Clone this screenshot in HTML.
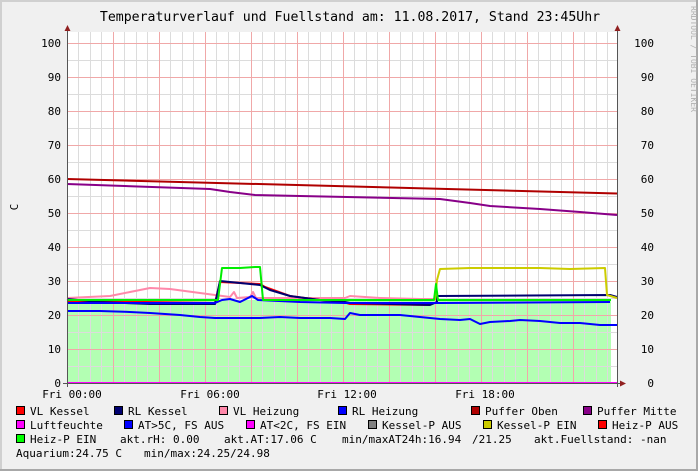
<!DOCTYPE html>
<html><head><meta charset="utf-8"><style>
html,body{margin:0;padding:0;background:#f0f0f0}
svg{display:block}
text{font-family:"DejaVu Sans Mono","Liberation Mono",monospace;white-space:pre}
</style></head><body>
<svg width="698" height="471" viewBox="0 0 698 471" xmlns="http://www.w3.org/2000/svg">
<rect x="0" y="0" width="698" height="471" fill="#f0f0f0"/>
<rect x="0" y="0" width="698" height="2" fill="#d0d0d0"/>
<rect x="0" y="0" width="2" height="471" fill="#d0d0d0"/>
<rect x="696" y="0" width="2" height="471" fill="#a8a8a8"/>
<rect x="0" y="469" width="698" height="2" fill="#a8a8a8"/>
<text x="350" y="21" font-size="13.2" text-anchor="middle" fill="#000">Temperaturverlauf und Fuellstand am: 11.08.2017, Stand 23:45Uhr</text>
<text transform="translate(691,6) rotate(90)" font-size="8" fill="#b0b0b0">RRDTOOL / TOBI OETIKER</text>
<rect x="67" y="32" width="550" height="351" fill="#fff"/>
<rect x="67" y="300" width="544" height="83" fill="#b3ffb3"/>
<g stroke="#dcdcdc">
<path d="M67 366.5h550M67 332.5h550M67 298.5h550M67 264.5h550M67 230.5h550M67 196.5h550M67 162.5h550M67 128.5h550M67 94.5h550M67 60.5h550"/>
<path d="M78.5 32v351M90.5 32v351M101.5 32v351M124.5 32v351M136.5 32v351M147.5 32v351M170.5 32v351M182.5 32v351M193.5 32v351M216.5 32v351M228.5 32v351M239.5 32v351M262.5 32v351M274.5 32v351M285.5 32v351M308.5 32v351M320.5 32v351M331.5 32v351M354.5 32v351M366.5 32v351M377.5 32v351M400.5 32v351M412.5 32v351M423.5 32v351M446.5 32v351M458.5 32v351M469.5 32v351M492.5 32v351M504.5 32v351M515.5 32v351M538.5 32v351M550.5 32v351M561.5 32v351M584.5 32v351M596.5 32v351M607.5 32v351"/>
</g>
<g stroke="#f0a8a8">
<path d="M67 349.5h550M67 315.5h550M67 281.5h550M67 247.5h550M67 213.5h550M67 179.5h550M67 145.5h550M67 111.5h550M67 77.5h550M67 43.5h550"/>
<path d="M113.5 32v351M159.5 32v351M205.5 32v351M251.5 32v351M297.5 32v351M343.5 32v351M389.5 32v351M435.5 32v351M481.5 32v351M527.5 32v351M573.5 32v351"/>
</g>
<g fill="none" stroke-width="2" stroke-linejoin="round">
<polyline stroke="#b00000" points="67,179 617,193.5"/>
<polyline stroke="#880088" points="67,184 210,189 230,192 255,195 300,196 440,199 470,203 490,206 540,209 580,212 617,215"/>
<polyline stroke="#0000ff" points="67,311 80,311 100,311 130,312 150,313 180,315 200,317 215,318 240,318 260,318 280,317 300,318 330,318 345,319 350,313 360,315 380,315 400,315 420,317 440,319 460,320 470,319 480,324 490,322 510,321 520,320 540,321 560,323 580,323 600,325 617,325"/>
<polyline stroke="#ff88aa" points="67,298 110,296 130,292 150,288 170,289 200,293 215,295 230,297 234,292 237,298 250,297 253,292 256,298 300,298 345,298 350,296 380,298 420,299 435,299"/>
<polyline stroke="#ff0000" points="67,301 215,303 220,282 260,284 265,287 290,296 320,300 340,301 350,304 430,305"/>
<polyline stroke="#000070" points="67,299 100,302 150,304 215,304 220,281 260,285 270,290 290,296 320,300 345,302 350,303 430,305 437,302 437,296 610,295 617,297"/>
<polyline stroke="#cccc00" points="435,300 437,280 440,269 470,268 500,268 540,268 570,269 605,268 607,295 617,298"/>
<polyline stroke="#0000ff" points="67,303 215,303 222,300 230,299 240,302 252,296 258,300 300,302 345,303 430,303 440,303 610,302"/>
<polyline stroke="#00ee00" points="67,300 218,300 222,268 240,268 255,267 260,267 263,300 430,300 434,300 436,284 438,300 611,300"/>
</g>
<line x1="67" y1="383" x2="617" y2="383" stroke="#ff00ff" stroke-width="2"/>
<line x1="67.5" y1="28" x2="67.5" y2="387" stroke="#555"/>
<line x1="617.5" y1="28" x2="617.5" y2="387" stroke="#555"/>
<line x1="63" y1="383.5" x2="622" y2="383.5" stroke="#555"/>
<path d="M64.5 31 L67.5 25 L70.5 31Z M614.5 31 L617.5 25 L620.5 31Z M620 380.5 L626 383.5 L620 386.5Z" fill="#902020"/>
<g font-size="11" fill="#000" text-anchor="end">
<text x="61" y="47">100</text><text x="61" y="81">90</text><text x="61" y="115">80</text><text x="61" y="149">70</text><text x="61" y="183">60</text><text x="61" y="217">50</text><text x="61" y="251">40</text><text x="61" y="285">30</text><text x="61" y="319">20</text><text x="61" y="353">10</text><text x="61" y="387">0</text>
<text x="654" y="47">100</text><text x="654" y="81">90</text><text x="654" y="115">80</text><text x="654" y="149">70</text><text x="654" y="183">60</text><text x="654" y="217">50</text><text x="654" y="251">40</text><text x="654" y="285">30</text><text x="654" y="319">20</text><text x="654" y="353">10</text><text x="654" y="387">0</text>
</g>
<text transform="translate(18,207) rotate(-90)" font-size="11" text-anchor="middle">C</text>
<g font-size="11" text-anchor="middle">
<text x="72" y="398">Fri 00:00</text><text x="210" y="398">Fri 06:00</text><text x="347" y="398">Fri 12:00</text><text x="485" y="398">Fri 18:00</text>
</g>
<g stroke="#000" stroke-width="1">
<rect x="16.5" y="406.5" width="8" height="8" fill="#ff0000"/>
<rect x="114.5" y="406.5" width="8" height="8" fill="#000070"/>
<rect x="219.5" y="406.5" width="8" height="8" fill="#ff88aa"/>
<rect x="338.5" y="406.5" width="8" height="8" fill="#0000ff"/>
<rect x="471.5" y="406.5" width="8" height="8" fill="#b00000"/>
<rect x="583.5" y="406.5" width="8" height="8" fill="#880088"/>
<rect x="16.5" y="420.5" width="8" height="8" fill="#ff00ff"/>
<rect x="124.5" y="420.5" width="8" height="8" fill="#0000ff"/>
<rect x="246.5" y="420.5" width="8" height="8" fill="#ff00ff"/>
<rect x="368.5" y="420.5" width="8" height="8" fill="#808080"/>
<rect x="483.5" y="420.5" width="8" height="8" fill="#cccc00"/>
<rect x="598.5" y="420.5" width="8" height="8" fill="#ff0000"/>
<rect x="16.5" y="434.5" width="8" height="8" fill="#00ff00"/>
</g>
<g font-size="11" fill="#000">
<text x="30" y="415">VL Kessel</text>
<text x="128" y="415">RL Kessel</text>
<text x="233" y="415">VL Heizung</text>
<text x="352" y="415">RL Heizung</text>
<text x="485" y="415">Puffer Oben</text>
<text x="597" y="415">Puffer Mitte</text>
<text x="30" y="429">Luftfeuchte</text>
<text x="138" y="429">AT&gt;5C, FS AUS</text>
<text x="260" y="429">AT&lt;2C, FS EIN</text>
<text x="382" y="429">Kessel-P AUS</text>
<text x="497" y="429">Kessel-P EIN</text>
<text x="612" y="429">Heiz-P AUS</text>
<text x="30" y="443">Heiz-P EIN</text>
<text x="120" y="443">akt.rH: 0.00</text>
<text x="224" y="443">akt.AT:17.06 C</text>
<text x="342" y="443">min/maxAT24h:16.94</text>
<text x="472" y="443">/21.25</text>
<text x="534" y="443">akt.Fuellstand: -nan</text>
<text x="16" y="457">Aquarium:24.75 C</text>
<text x="144" y="457">min/max:24.25/24.98</text>
</g>
</svg>
</body></html>
